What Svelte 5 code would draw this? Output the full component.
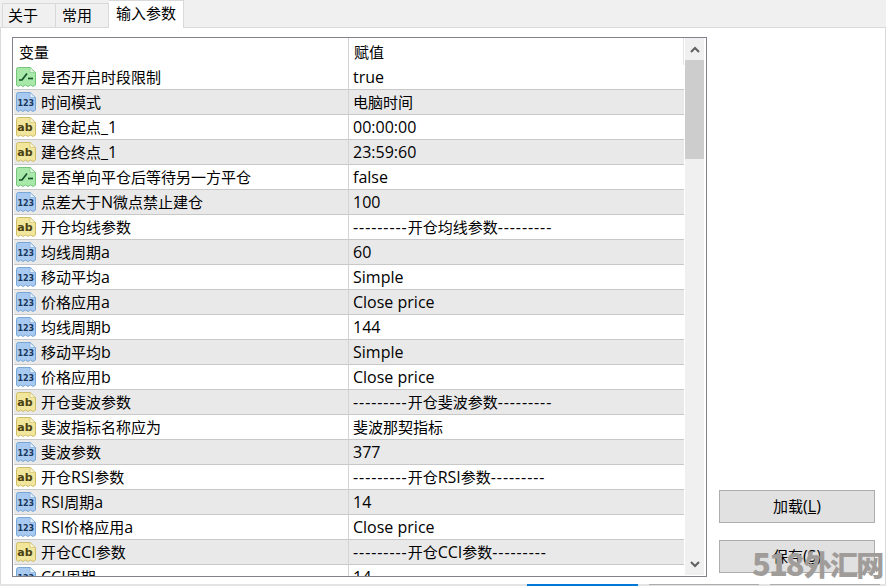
<script lang="ts">
  type Kind = 'bool' | 'num' | 'str'

  const rows: { kind: Kind; name: string; value: string }[] = [
    { kind: 'bool', name: '是否开启时段限制', value: 'true' },
    { kind: 'num', name: '时间模式', value: '电脑时间' },
    { kind: 'str', name: '建仓起点_1', value: '00:00:00' },
    { kind: 'str', name: '建仓终点_1', value: '23:59:60' },
    { kind: 'bool', name: '是否单向平仓后等待另一方平仓', value: 'false' },
    { kind: 'num', name: '点差大于N微点禁止建仓', value: '100' },
    { kind: 'str', name: '开仓均线参数', value: '---------开仓均线参数---------' },
    { kind: 'num', name: '均线周期a', value: '60' },
    { kind: 'num', name: '移动平均a', value: 'Simple' },
    { kind: 'num', name: '价格应用a', value: 'Close price' },
    { kind: 'num', name: '均线周期b', value: '144' },
    { kind: 'num', name: '移动平均b', value: 'Simple' },
    { kind: 'num', name: '价格应用b', value: 'Close price' },
    { kind: 'str', name: '开仓斐波参数', value: '---------开仓斐波参数---------' },
    { kind: 'str', name: '斐波指标名称应为', value: '斐波那契指标' },
    { kind: 'num', name: '斐波参数', value: '377' },
    { kind: 'str', name: '开仓RSI参数', value: '---------开仓RSI参数---------' },
    { kind: 'num', name: 'RSI周期a', value: '14' },
    { kind: 'num', name: 'RSI价格应用a', value: 'Close price' },
    { kind: 'str', name: '开仓CCI参数', value: '---------开仓CCI参数---------' },
    { kind: 'num', name: 'CCI周期', value: '14' },
  ]

  const palette = {
    bool: { fill: '#a8e8a8', edge: '#74c47c', fold: '#e4f8e4' },
    num: { fill: '#a9caf0', edge: '#78a6d6', fold: '#e6f0fb' },
    str: { fill: '#f2e69c', edge: '#cdbc68', fold: '#fbf6d6' },
  }

  // latin letters come out larger than the CJK ones in the original
  function runs(text: string) {
    return text.match(/-+|[\x20-\x7e]+|[^\x20-\x7e]+/g) ?? []
  }
  function runClass(part: string) {
    if (part[0] === '-') return 'dash'
    return part.charCodeAt(0) < 127 ? 'latin' : ''
  }
</script>

{#snippet icon(kind: Kind)}
  <svg class="icon" width="20" height="20" viewBox="0 0 20 20">
    <path
      d="M0.5 2.5 Q0.5 0.5 2.5 0.5 H14 L19.5 5.5 V18 L17 19.5 L14.5 18 L12 19.5 L9.5 18 L7 19.5 L4.5 18 L2 19.5 L0.5 18 Z"
      fill={palette[kind].fill}
      stroke={palette[kind].edge}
    />
    <path d="M14 0.5 V5.5 H19.5 Z" fill={palette[kind].fold} stroke={palette[kind].edge} stroke-width="0.6" />
    {#if kind === 'bool'}
      <path d="M3 13 H6 L11 6.5" fill="none" stroke="#14502a" stroke-width="1.7" />
      <path d="M12 11.5 H17" fill="none" stroke="#14502a" stroke-width="1.7" />
    {:else if kind === 'num'}
      <text x="9.8" y="14" class="glyph num">123</text>
    {:else}
      <text x="9" y="14" class="glyph ab">ab</text>
    {/if}
  </svg>
{/snippet}

{#snippet label(text: string)}
  {#each runs(text) as part}<span class={runClass(part)}>{part}</span>{/each}
{/snippet}

<div class="window">
  <div class="tabs">
    <div class="tab first">关于</div>
    <div class="tab second">常用</div>
    <div class="tab active">输入参数</div>
  </div>

  <div class="panel">
    <div class="list">
      <div class="table">
        <div class="head">
          <div class="h-name">变量</div>
          <div class="h-value">赋值</div>
        </div>
        {#each rows as row, i}
          <div class="row" class:alt={i % 2 === 1}>
            <div class="name">
              {@render icon(row.kind)}
              <div class="text">{@render label(row.name)}</div>
            </div>
            <div class="value">{@render label(row.value)}</div>
          </div>
        {/each}
      </div>
      <div class="scrollbar">
        <div class="arrow">
          <svg width="10" height="7" viewBox="0 0 10 7"><path d="M1 6 L5 2 L9 6" fill="none" stroke="#606060" stroke-width="2" /></svg>
        </div>
        <div class="thumb"></div>
        <div class="rest"></div>
        <div class="arrow">
          <svg width="10" height="7" viewBox="0 0 10 7"><path d="M1 1 L5 5 L9 1" fill="none" stroke="#606060" stroke-width="2" /></svg>
        </div>
      </div>
    </div>

    <div class="side">
      <button>加载<span class="latin">(<u>L</u>)</span></button>
      <button>保存<span class="latin">(<u>S</u>)</span></button>
    </div>
  </div>

  <div class="footer">
    <div class="f-btn primary"></div>
    <div class="f-btn"></div>
    <div class="f-btn"></div>
  </div>

  <div class="watermark"><span class="wm-num">518</span><span class="wm-cjk">外汇网</span></div>
</div>

<style>
  :global(body) {
    margin: 0;
    background: #fff;
  }
  .window {
    position: relative;
    width: 886px;
    height: 586px;
    overflow: hidden;
    display: flex;
    flex-direction: column;
    font: 15px 'Noto Sans CJK SC', sans-serif;
    color: #000;
  }
  .latin {
    font: 16px 'Open Sans', sans-serif;
  }
  .dash {
    font: 16px 'Open Sans', sans-serif;
    letter-spacing: 0.92px;
  }
  .tabs {
    height: 27px;
    display: flex;
    align-items: flex-end;
    background: #f0f0f0;
    flex: none;
    box-sizing: border-box;
    padding-left: 2px;
  }
  .tab {
    box-sizing: border-box;
    height: 24px;
    border: 1px solid #d9d9d9;
    border-bottom: none;
    border-left: none;
    line-height: 22px;
    padding-left: 5px;
  }
  .first {
    width: 54px;
    border-left: 1px solid #d9d9d9;
  }
  .second {
    width: 53px;
    padding-left: 6px;
  }
  .active {
    width: 75px;
    height: 28px;
    margin-bottom: -1px;
    background: #fff;
    padding-left: 7px;
    line-height: 24px;
    position: relative;
    z-index: 1;
  }
  .panel {
    flex: none;
    height: 557px;
    box-sizing: border-box;
    border: 1px solid #d9d9d9;
    border-bottom: 0;
    padding: 9px 10px 6px 11px;
    display: flex;
    gap: 12px;
  }
  .list {
    width: 695px;
    height: 540px;
    box-sizing: border-box;
    border: 1px solid #82828f;
    display: flex;
    padding: 0 1px 0 1px;
    overflow: hidden;
    flex: none;
  }
  .table {
    width: 670px;
    flex: none;
    overflow: hidden;
  }
  .head {
    height: 27px;
    display: flex;
    line-height: 28px;
  }
  .h-name {
    width: 335px;
    padding-left: 5px;
    box-sizing: border-box;
    border-right: 1px solid #d4d4d4;
  }
  .h-value {
    flex: 1;
    padding-left: 5px;
    border-right: 1px solid #e4e4e4;
  }
  .row {
    height: 25px;
    box-sizing: border-box;
    display: flex;
    align-items: center;
    border-bottom: 1px solid #c8c8c8;
    flex: none;
  }
  .row.alt {
    background: #e9e9e9;
  }
  .name {
    width: 335px;
    height: 24px;
    box-sizing: border-box;
    display: flex;
    align-items: center;
    gap: 5px;
    padding-left: 2px;
    border-right: 1px solid #d4d4d4;
    white-space: nowrap;
  }
  .text {
    line-height: 24px;
    height: 24px;
  }
  .value {
    padding-left: 4px;
    white-space: nowrap;
    line-height: 24px;
    height: 24px;
  }
  .icon {
    flex: none;
  }
  .glyph {
    font-family: 'DejaVu Sans', sans-serif;
    font-weight: 700;
    text-anchor: middle;
  }
  .num {
    font-size: 8px;
    fill: #17375e;
  }
  .ab {
    font-size: 11px;
    fill: #4a4210;
  }
  .scrollbar {
    width: 19px;
    margin-left: 1px;
    margin-bottom: 1px;
    background: #f0f0f0;
    display: flex;
    flex-direction: column;
    flex: none;
  }
  .arrow {
    height: 22px;
    display: flex;
    align-items: center;
    justify-content: center;
    flex: none;
  }
  .thumb {
    height: 99px;
    background: #cdcdcd;
    flex: none;
  }
  .rest {
    flex: 1;
  }
  .side {
    flex: 1;
    display: flex;
    flex-direction: column;
    justify-content: flex-end;
    gap: 17px;
    padding-bottom: 5px;
  }
  button {
    width: 156px;
    height: 33px;
    box-sizing: border-box;
    background: #e1e1e1;
    border: 1px solid #adadad;
    font: inherit;
    color: #000;
    padding: 0 0 2px;
  }
  .footer {
    position: absolute;
    left: 0;
    right: 0;
    top: 584px;
    height: 2px;
    display: flex;
    padding-left: 527px;
    gap: 11px;
    background: #e4e4e4;
  }
  .f-btn {
    width: 110px;
    box-sizing: border-box;
    background: #e1e1e1;
    border-top: 1px solid #adadad;
  }
  .primary {
    width: 111px;
    background: #0078d7;
    border-top: 0;
  }
  .watermark {
    position: absolute;
    left: 752px;
    top: 543px;
    line-height: 40px;
    font-family: 'Noto Sans CJK SC', sans-serif;
    font-weight: 900;
    color: #a09c9a;
    white-space: nowrap;
  }
  .wm-num {
    font-size: 31px;
    letter-spacing: -2px;
  }
  .wm-cjk {
    font-size: 28px;
    letter-spacing: -1.7px;
    margin-left: 1px;
  }
</style>
